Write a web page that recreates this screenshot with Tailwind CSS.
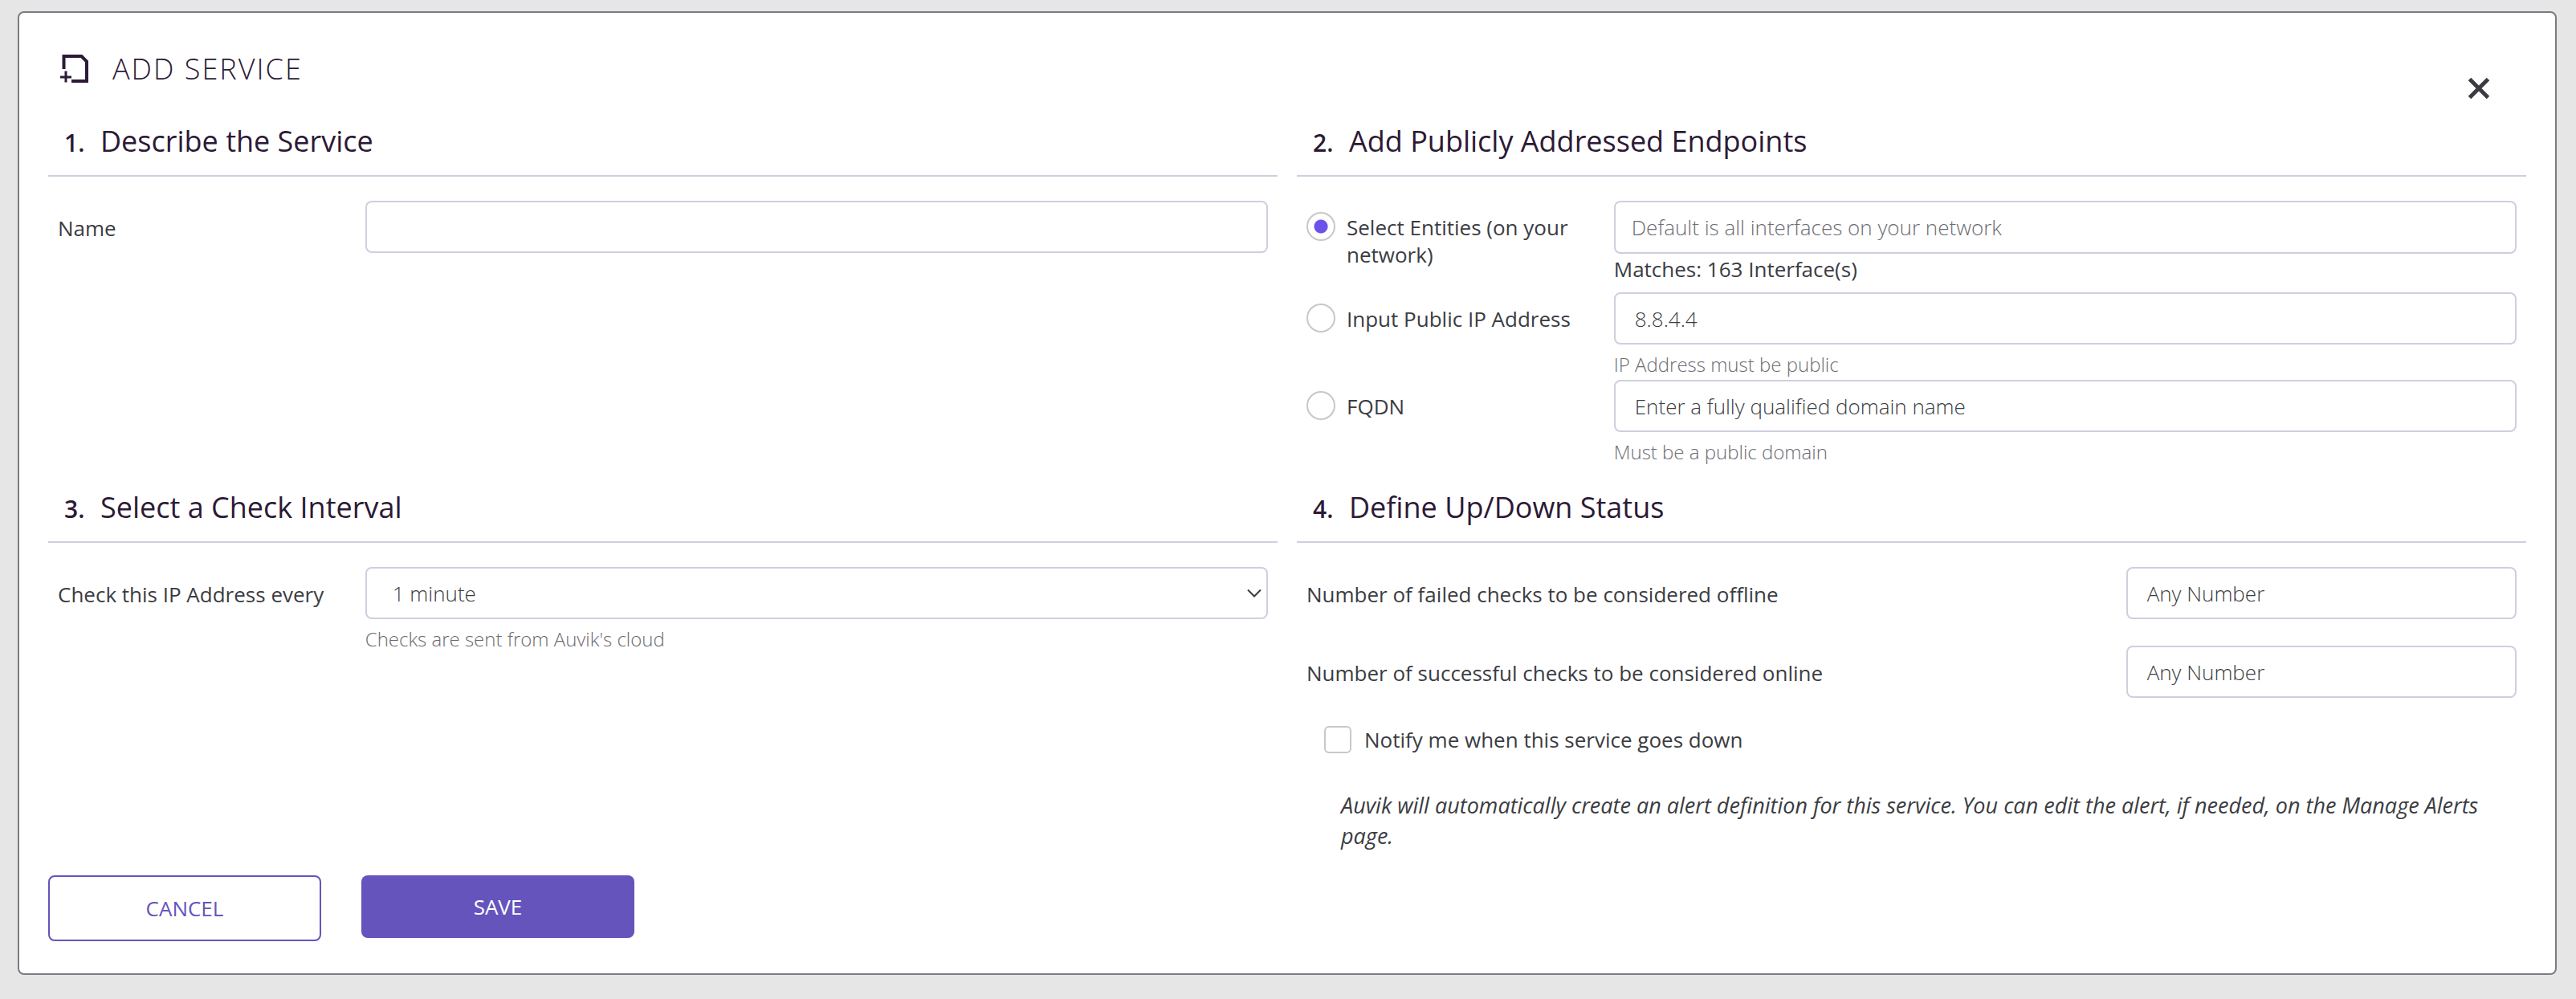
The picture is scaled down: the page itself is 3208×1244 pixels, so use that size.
<!DOCTYPE html>
<html lang="en">
<head>
<meta charset="utf-8">
<title>Add Service</title>
<script src="https://cdn.jsdelivr.net/npm/@tailwindcss/browser@4"></script>
</head>
<body class="min-h-screen bg-[#e6e6e6] pt-[14px] pr-6 pb-[30px] pl-[22px] font-['Open_Sans',sans-serif] text-[26px] leading-[34px] text-[#3b3c42]">
<main class="rounded-lg border-2 border-[#7c7a82] bg-white px-9 pt-[45px] pb-10">
  <header class="mb-[21px] flex items-start justify-between">
    <div class="flex items-center pl-[15px]">
      <svg class="mr-[29px] h-9 w-9" viewBox="0 0 36 36" fill="none" stroke="#2d1a36" aria-hidden="true">
        <path d="M4.500 18V2H26.500L33 8.500V33H14" stroke-width="4"/>
        <path d="M0 28H14M7 20.500V34.500" stroke-width="3"/>
      </svg>
      <h1 class="text-4xl leading-[50px] font-light tracking-[2px] text-[#2d1a36]">ADD SERVICE</h1>
    </div>
    <button type="button" aria-label="Close" class="mt-[29px] mr-[39px] flex size-10 items-center justify-center">
      <svg class="h-7 w-7" viewBox="0 0 28 28" stroke="#3b3c42" stroke-width="5" aria-hidden="true"><path d="M2.500 2.500L25.500 25.500M25.500 2.500L2.500 25.500"/></svg>
    </button>
  </header>

  <form>
    <div class="grid grid-cols-2 gap-x-6 gap-y-[25px]">
      <section>
        <h2 class="mb-[30px] flex items-baseline border-b-2 border-[#d0cedf] pb-[17px] pl-5 text-4xl leading-[50px] text-[#2d1a36]"><span class="w-[45px] text-3xl leading-9 font-semibold">1.</span>Describe the Service</h2>
        <div class="grid grid-cols-[1fr_3fr]">
          <label for="name" class="px-3 pt-[17px]">Name</label>
          <div class="px-3"><input id="name" type="text" class="block h-[65px] w-full rounded-lg border-2 border-[#d0cedf] px-6 font-light"></div>
        </div>
      </section>

      <section>
        <h2 class="mb-[30px] flex items-baseline border-b-2 border-[#d0cedf] pb-[17px] pl-5 text-4xl leading-[50px] text-[#2d1a36]"><span class="w-[45px] text-3xl leading-9 font-semibold">2.</span>Add Publicly Addressed Endpoints</h2>
        <div class="grid grid-cols-[1fr_3fr]">
          <div class="flex items-start gap-[14px] px-3 pt-[14px]">
            <input id="entities" name="endpoint" type="radio" checked class="size-9 shrink-0 appearance-none rounded-full border-2 border-[#c8c8c8] bg-white bg-[radial-gradient(circle,#6b52e8_0,#6b52e8_8px,transparent_9px)]">
            <label for="entities" class="pt-0.5">Select Entities (on your network)</label>
          </div>
          <div class="px-3 pb-[10px]">
            <input type="text" aria-label="Entities" placeholder="Default is all interfaces on your network" class="block h-[66px] w-full rounded-lg border-2 border-[#d0cedf] px-5 font-light placeholder:text-[#6b6c72]">
            <p class="leading-[38px]">Matches: 163 Interface(s)</p>
          </div>
          <div class="flex items-start gap-[14px] px-3 pt-[14px]">
            <input id="ip" name="endpoint" type="radio" class="size-9 shrink-0 appearance-none rounded-full border-2 border-[#c8c8c8] bg-white">
            <label for="ip" class="pt-0.5">Input Public IP Address</label>
          </div>
          <div class="px-3">
            <input type="text" aria-label="Public IP address" value="8.8.4.4" class="block h-[65px] w-full rounded-lg border-2 border-[#d0cedf] px-6 font-light">
            <p class="mt-1.5 text-2xl leading-[38px] font-light text-[#6b6c72]">IP Address must be public</p>
          </div>
          <div class="flex items-start gap-[14px] px-3 pt-[14px]">
            <input id="fqdn" name="endpoint" type="radio" class="size-9 shrink-0 appearance-none rounded-full border-2 border-[#c8c8c8] bg-white">
            <label for="fqdn" class="pt-0.5">FQDN</label>
          </div>
          <div class="px-3">
            <input type="text" aria-label="Domain name" value="Enter a fully qualified domain name" class="block h-[65px] w-full rounded-lg border-2 border-[#d0cedf] px-6 font-light">
            <p class="mt-1.5 text-2xl leading-[38px] font-light text-[#6b6c72]">Must be a public domain</p>
          </div>
        </div>
      </section>

      <section>
        <h2 class="mb-[30px] flex items-baseline border-b-2 border-[#d0cedf] pb-[17px] pl-5 text-4xl leading-[50px] text-[#2d1a36]"><span class="w-[45px] text-3xl leading-9 font-semibold">3.</span>Select a Check Interval</h2>
        <div class="grid grid-cols-[1fr_3fr]">
          <label for="interval" class="px-3 pt-[17px]">Check this IP Address every</label>
          <div class="px-3">
            <div class="relative">
              <select id="interval" class="block h-[65px] w-full appearance-none rounded-lg border-2 border-[#d0cedf] bg-white px-8 font-light"><option>1 minute</option></select>
              <svg class="pointer-events-none absolute top-[27px] right-2 h-3 w-[18px]" viewBox="0 0 18 12" fill="none" stroke="#3b3c42" stroke-width="2" aria-hidden="true"><path d="M1 1.500L9 9.500L17 1.500"/></svg>
            </div>
            <p class="mt-1.5 text-2xl leading-[38px] font-light text-[#6b6c72]">Checks are sent from Auvik's cloud</p>
          </div>
        </div>
      </section>

      <section>
        <h2 class="mb-[30px] flex items-baseline border-b-2 border-[#d0cedf] pb-[17px] pl-5 text-4xl leading-[50px] text-[#2d1a36]"><span class="w-[45px] text-3xl leading-9 font-semibold">4.</span>Define Up/Down Status</h2>
        <div class="grid grid-cols-[2fr_1fr] gap-y-[33px]">
          <label for="failed" class="px-3 pt-[17px]">Number of failed checks to be considered offline</label>
          <div class="px-3"><input id="failed" type="text" value="Any Number" class="block h-[65px] w-full rounded-lg border-2 border-[#d0cedf] px-6 font-light"></div>
          <label for="successful" class="px-3 pt-[17px]">Number of successful checks to be considered online</label>
          <div class="px-3"><input id="successful" type="text" value="Any Number" class="block h-[65px] w-full rounded-lg border-2 border-[#d0cedf] px-6 font-light"></div>
        </div>
        <div class="mt-[35px] flex items-center gap-4 pl-[34px]">
          <input id="notify" type="checkbox" class="size-[34px] appearance-none rounded-md border-2 border-[#c8c8c8] bg-white">
          <label for="notify">Notify me when this service goes down</label>
        </div>
        <p class="mt-[46px] pr-3 pl-[55px] text-[27px] leading-[38px] italic">Auvik will automatically create an alert definition for this service. You can edit the alert, if needed, on the Manage Alerts page.</p>
      </section>
    </div>

    <div class="mt-[30px] flex items-start gap-[50px]">
      <button type="button" class="h-[82px] w-[340px] rounded-lg border-2 border-[#6554bc] text-[#6554bc]">CANCEL</button>
      <button type="button" class="h-[78px] w-[340px] rounded-lg bg-[#6554bc] text-white">SAVE</button>
    </div>
  </form>
</main>
</body>
</html>
